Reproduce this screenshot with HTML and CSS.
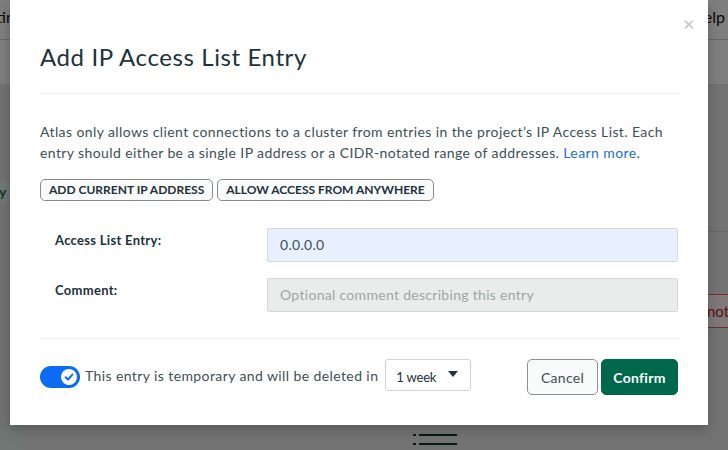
FILE: index.html
```html
<!DOCTYPE html>
<html>
<head>
<meta charset="utf-8">
<link rel="stylesheet" href="styles.css">
</head>
<body>
<div class="page">
  <header class="topbar">
    <span class="nav-left">Settings</span>
    <span class="nav-right">Help</span>
  </header>
  <div class="subbar"></div>
  <main class="content">
    <div class="side-green">Apply</div>
    <div class="hr-right"></div>
    <div class="alert">not</div>
    <div class="bottom-left"></div>
    <div class="list-icon">
      <div class="li-row"><span class="dot"></span><span class="bar"></span></div>
      <div class="li-row"><span class="dot"></span><span class="bar"></span></div>
    </div>
  </main>
</div>
<div class="overlay"></div>
<div class="modal">
  <button class="close" aria-label="Close">&#x2715;</button>
  <h1 class="title">Add IP Access List Entry</h1>
  <hr class="sep">
  <p class="desc">Atlas only allows client connections to a cluster from entries in the project’s IP Access List. Each entry should either be a single IP address or a CIDR-notated range of addresses. <a href="#" class="link">Learn more</a>.</p>
  <div class="quick">
    <button class="qbtn">ADD CURRENT IP ADDRESS</button>
    <button class="qbtn">ALLOW ACCESS FROM ANYWHERE</button>
  </div>
  <div class="form">
    <div class="row">
      <label class="lbl">Access List Entry:</label>
      <div class="field filled">0.0.0.0</div>
    </div>
    <div class="row">
      <label class="lbl">Comment:</label>
      <div class="field disabled">Optional comment describing this entry</div>
    </div>
  </div>
  <hr class="sep sep2">
  <div class="footer">
    <div class="temp">
      <span class="toggle"><span class="knob"><svg width="12" height="12" viewBox="0 0 12 12"><path d="M2.6 6.2 L5 8.5 L9.4 3.6" fill="none" stroke="#0b6cf3" stroke-width="2" stroke-linecap="round" stroke-linejoin="round"/></svg></span></span>
      <span class="temp-text">This entry is temporary and will be deleted in</span>
      <span class="select">1 week<span class="caret"></span></span>
    </div>
    <div class="actions">
      <button class="btn cancel">Cancel</button>
      <button class="btn confirm">Confirm</button>
    </div>
  </div>
</div>
</body>
</html>
```
FILE: styles.css
```css
* { box-sizing: border-box; }
html, body { margin: 0; padding: 0; }
body {
  width: 728px;
  height: 450px;
  overflow: hidden;
  font-family: "Lato", "Noto Sans", sans-serif;
  background: #e6e6e6;
  position: relative;
}
.page { width: 728px; height: 450px; }
.topbar {
  height: 40px;
  background: #fff;
  border-bottom: 1px solid #d0d0d0;
  display: flex;
  justify-content: space-between;
  align-items: center;
  padding: 0 0 6px 0;
  font-size: 16px;
  color: #111;
}
.nav-left { margin-left: -26px; }
.nav-right { margin-right: 3px; }
.subbar { height: 45px; background: #fff; border-bottom: 1px solid #e0e0e0; }
.content { position: relative; height: 365px; }
.side-green {
  position: absolute; left: -34px; top: 96px;
  font-size: 14px; font-weight: bold; color: #1f7a55;
  background: #e3f2ea; padding: 2px 4px;
}
.hr-right { position: absolute; right: 0; top: 146px; width: 30px; height: 1px; background: #cfcfcf; }
.alert {
  position: absolute; right: -12px; top: 209px; width: 36px; height: 34px;
  border-top: 1px solid #e06060; border-bottom: 1px solid #e06060;
  color: #b02b2b; font-size: 15px; line-height: 32px; padding-left: 3px;
  background: #fff2f2;
}
.bottom-left { position: absolute; left: 0; top: 339px; width: 25px; height: 26px; background: #dceee8; }
.list-icon { position: absolute; left: 413px; top: 349px; display: flex; flex-direction: column; gap: 7px; }
.li-row { display: flex; gap: 3px; align-items: center; }
.dot { width: 3px; height: 2px; background: #0a3b2b; }
.bar { width: 38px; height: 2px; background: #0a3b2b; }
.overlay { position: absolute; inset: 0; background: rgba(0,0,0,0.5); }

.modal {
  position: absolute;
  left: 10px; top: 0;
  width: 698px; height: 425px;
  background: #fff;
  box-shadow: 0 4px 12px rgba(0,0,0,0.25);
  padding: 41px 30px 0 30px;
  color: #3d4f58;
}
.close {
  position: absolute; right: 13px; top: 17px;
  border: 0; background: none; padding: 0;
  color: #c4c4c4; font-size: 15px; line-height: 16px; cursor: pointer;
  font-family: "DejaVu Sans", sans-serif;
}
.title {
  margin: 0;
  font-size: 24px;
  line-height: 32px;
  font-weight: 400;
  color: #21313c;
  letter-spacing: 0.6px;
}
.sep { border: 0; border-top: 1px solid #e7eeec; margin: 20px 0 0 0; }
.desc {
  margin: 27px 0 0 0;
  font-size: 14px;
  line-height: 21px;
  color: #3d4f58;
  letter-spacing: 0.4px;
}
.link { color: #1a6fd4; text-decoration: none; }
.quick { display: flex; gap: 4px; margin-top: 16px; }
.qbtn {
  height: 22px;
  padding: 0 8px;
  border: 1px solid #8a8a8a;
  border-radius: 5px;
  background: #f9fbfa;
  font-family: inherit;
  font-size: 12px;
  font-weight: 700;
  color: #21313c;
  line-height: 20px;
}
.form { display: flex; flex-direction: column; gap: 16px; margin-top: 27px; }
.row { display: flex; }
.lbl {
  width: 227px;
  padding: 2px 0 0 15px;
  font-size: 13px;
  line-height: 20px;
  font-weight: 700;
  color: #21313c;
  letter-spacing: 0.3px;
}
.field {
  flex: 1;
  height: 34px;
  border: 1px solid #d5d8da;
  border-radius: 2px;
  padding: 0 12px;
  font-size: 14px;
  line-height: 32px;
  letter-spacing: 0.3px;
}
.filled { background: #e8f0fe; color: #3d4f58; }
.disabled { background: #e9eceb; color: #a0a6a4; }
.sep2 { margin-top: 26px; }
.footer {
  display: flex;
  justify-content: space-between;
  align-items: center;
  margin-top: 16px;
}
.temp { display: flex; align-items: center; }
.toggle {
  width: 40px; height: 22px;
  border-radius: 11px;
  background: #0b6cf3;
  position: relative;
  display: inline-block;
  margin-top: 4px;
}
.knob {
  position: absolute; right: 1px; top: 1px;
  width: 20px; height: 20px; border-radius: 50%;
  background: #fff;
  border: 2px solid #0b6cf3;
  display: flex; align-items: center; justify-content: center;
}
.temp-text { margin-left: 5px; font-size: 14px; color: #3d4f58; letter-spacing: 0.4px; }
.select {
  margin-left: 7px;
  width: 86px; height: 32px;
  border: 1px solid #d0d3d4;
  border-radius: 3px;
  padding: 0 10px;
  font-size: 13px;
  line-height: 34px;
  color: #21313c;
  position: relative;
  letter-spacing: -0.2px;
}
.caret {
  position: absolute; right: 12px; top: 11px;
  width: 0; height: 0;
  border-left: 5px solid transparent;
  border-right: 5px solid transparent;
  border-top: 6px solid #21313c;
}
.actions { display: flex; gap: 3px; margin-top: 4px; }
.btn {
  height: 36px;
  border-radius: 5px;
  font-family: inherit;
  font-size: 14px;
  letter-spacing: 0.3px;
}
.cancel { width: 71px; background: #f9fbfa; border: 1px solid #8a8f91; color: #3d4f58; }
.confirm { width: 77px; background: #00684a; border: 1px solid #00684a; color: #fff; font-weight: 700; }
```
